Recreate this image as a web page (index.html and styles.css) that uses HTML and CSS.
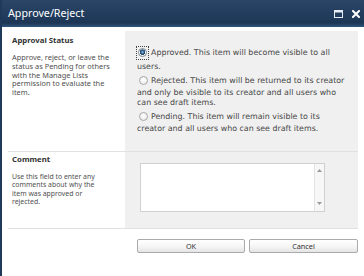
FILE: index.html
```html
<!DOCTYPE html>
<html>
<head>
<meta charset="utf-8">
<link rel="stylesheet" href="styles.css">
</head>
<body>
<div class="dialog">
  <div class="titlebar">
    <span class="title">Approve/Reject</span>
    <span class="title-icons">
      <svg class="ico" width="9" height="8" viewBox="0 0 9 8"><rect x="0.5" y="0.5" width="8" height="7" fill="none" stroke="#e8edf3" stroke-width="1"/><rect x="0.5" y="0.5" width="8" height="2" fill="#e8edf3"/></svg>
      <svg class="ico" width="8" height="8" viewBox="0 0 8 8"><path d="M1 1 L7 7 M7 1 L1 7" stroke="#ffffff" stroke-width="2" stroke-linecap="square"/></svg>
    </span>
  </div>
  <div class="body">
    <div class="section s1">
      <div class="label">
        <div class="label-head">Approval Status</div>
        <div class="label-desc">Approve, reject, or leave the<br>status as Pending for others<br>with the Manage Lists<br>permission to evaluate the<br>item.</div>
      </div>
      <div class="field">
        <div class="options">
          <div class="option"><span class="focus"><span class="radio checked"></span></span>Approved. This item will become visible to all users.</div>
          <div class="option"><span class="radio"></span>Rejected. This item will be returned to its creator and only be visible to its creator and all users who can see draft items.</div>
          <div class="option"><span class="radio"></span>Pending. This item will remain visible to its creator and all users who can see draft items.</div>
        </div>
      </div>
    </div>
    <div class="section s2">
      <div class="label">
        <div class="label-head">Comment</div>
        <div class="label-desc small">Use this field to enter any<br>comments about why the<br>item was approved or<br>rejected.</div>
      </div>
      <div class="field">
        <div class="textarea">
          <div class="text-input"></div>
          <div class="scrollbar">
            <svg width="5" height="3" viewBox="0 0 5 3"><path d="M0 3 L2.5 0 L5 3 Z" fill="#9a9a9a"/></svg>
            <svg width="5" height="3" viewBox="0 0 5 3"><path d="M0 0 L2.5 3 L5 0 Z" fill="#9a9a9a"/></svg>
          </div>
        </div>
      </div>
    </div>
    <div class="buttons">
      <button class="btn">OK</button>
      <button class="btn">Cancel</button>
    </div>
  </div>
</div>
</body>
</html>
```
FILE: styles.css
```css
html, body {
  margin: 0;
  padding: 0;
  background: #ffffff;
}
.dialog {
  width: 364px;
  height: 276px;
  box-sizing: border-box;
  border-left: 2px solid #1e3959;
  background: #ffffff;
  overflow: hidden;
}
.titlebar {
  height: 27px;
  box-sizing: border-box;
  background: linear-gradient(#2b4566 0%, #213c5d 55%, #1c3655 85%, #31557e 100%);
  display: flex;
  align-items: center;
  justify-content: space-between;
  padding: 0 4px 1px 6px;
}
.title {
  font-family: "Noto Sans", sans-serif;
  font-size: 10.7px;
  color: #ffffff;
  line-height: 12px;
}
.title-icons {
  display: flex;
  align-items: center;
  gap: 9px;
  padding-top: 1px;
}
.ico {
  display: block;
}
.body {
  padding: 4px 6px 0 6px;
}
.section {
  display: grid;
  grid-template-columns: 117px 1fr;
  border-bottom: 1px solid #e1e1e1;
}
.s1 {
  height: 121px;
  box-sizing: border-box;
}
.s2 {
  height: 77px;
  box-sizing: border-box;
}
.label {
  padding: 4px 0 0 4px;
}
.s2 .label {
  padding-top: 2px;
}
.label-head {
  font-family: "Noto Sans", sans-serif;
  font-weight: bold;
  font-size: 7.8px;
  line-height: 10px;
  color: #333333;
}
.label-desc {
  margin-top: 8px;
  font-family: "Noto Sans", sans-serif;
  font-size: 7.4px;
  line-height: 8.8px;
  color: #505050;
}
.label-desc.small {
  margin-top: 9px;
  font-size: 6.9px;
  line-height: 8.3px;
}
.field {
  background: #f0f0f0;
}
.s1 .field {
  padding: 14px 0 0 12px;
}
.options {
  width: 212px;
}
.option {
  font-family: "DejaVu Sans", Verdana, sans-serif;
  font-size: 7.9px;
  line-height: 9.6px;
  color: #474747;
  margin-bottom: 2px;
}
.focus {
  display: inline-block;
  vertical-align: middle;
  border: 1px dotted #444444;
  padding: 1px;
  margin: 1px 2px 2px -1px;
}
.radio {
  display: inline-block;
  vertical-align: middle;
  width: 9px;
  height: 9px;
  box-sizing: border-box;
  border-radius: 50%;
  border: 1px solid #a7a7a7;
  background: radial-gradient(circle at 50% 40%, #ffffff 0%, #e6e6e6 100%);
  margin: 3px 3px 3px 2px;
}
.focus .radio {
  margin: 0;
}
.radio.checked {
  border-color: #7d8a96;
  background: radial-gradient(circle at 50% 45%, #9fc4e6 0%, #2f6595 30%, #1d3f60 48%, #ffffff 58%, #e8e8e8 100%);
}
.s2 .field {
  padding: 11px 0 0 15px;
}
.textarea {
  width: 185px;
  height: 49px;
  box-sizing: border-box;
  border: 1px solid #d0d0d0;
  background: #ffffff;
  display: flex;
}
.text-input {
  flex: 1;
}
.scrollbar {
  width: 10px;
  box-sizing: border-box;
  border-left: 1px solid #e4e4e4;
  background: #f7f7f7;
  display: flex;
  flex-direction: column;
  justify-content: space-between;
  align-items: center;
  padding: 5px 0 6px;
}
.scrollbar svg {
  display: block;
}
.buttons {
  display: flex;
  justify-content: flex-end;
  gap: 4px;
  margin-top: 10px;
}
.btn {
  width: 108px;
  height: 14px;
  box-sizing: border-box;
  padding: 0;
  border: 1px solid #aaaaaa;
  border-radius: 2px;
  background: linear-gradient(#ffffff 0%, #f4f4f4 60%, #e4e4e4 100%);
  font-family: "Noto Sans", sans-serif;
  font-size: 7.3px;
  line-height: 12px;
  color: #333333;
}
.btn + .btn {
  width: 109px;
}
```
